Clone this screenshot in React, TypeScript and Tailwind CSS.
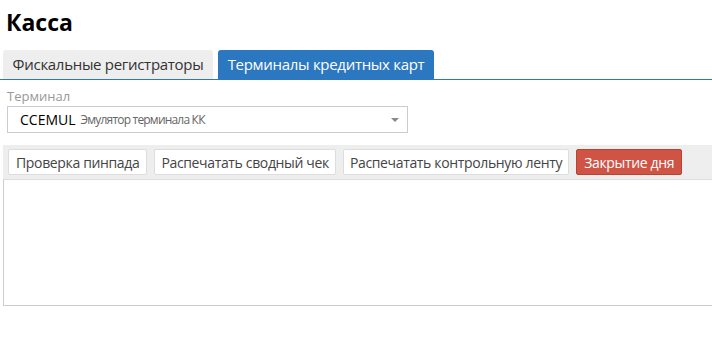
import React from "react";

const buttons = ["Проверка пинпада", "Распечатать сводный чек", "Распечатать контрольную ленту"];

export default function App() {
    return (
        <div className="bg-white min-h-screen text-[#333] pt-[8px]" style={{ fontFamily: '"Open Sans", "Noto Sans", sans-serif' }}>
            <h1 className="px-[6px] text-[23px] leading-[28px] font-bold text-black">Касса</h1>

            {/* Tabs */}
            <div className="mt-[14px] flex items-end gap-[5px] px-[3px] border-b border-[#2b77c0]">
                <div className="w-[210px] h-[29px] rounded-t-[3px] bg-[#eeeeee] text-[15px] tracking-[-0.3px] text-[#333] flex items-center justify-center">
                    Фискальные регистраторы
                </div>
                <div className="w-[216px] h-[29px] rounded-t-[3px] bg-[#2b77c0] text-[15px] tracking-[-0.3px] text-white flex items-center justify-center">
                    Терминалы кредитных карт
                </div>
            </div>

            {/* Terminal select */}
            <div className="px-[7px] mt-[8px]">
                <div className="text-[13px] leading-[17px] text-[#999]">Терминал</div>
                <div className="mt-[1px] w-[401px] h-[27px] border border-[#ccc] flex items-center pl-[12px] pr-[8px]">
                    <span className="text-[14px] text-black">CCEMUL</span>
                    <span className="ml-[5px] text-[12px] tracking-[-0.8px] text-[#666]">Эмулятор терминала КК</span>
                    <span className="ml-auto w-0 h-0 border-l-[4px] border-r-[4px] border-t-[4px] border-l-transparent border-r-transparent border-t-[#888]" />
                </div>
            </div>

            {/* Toolbar */}
            <div className="mt-[12px] ml-[3px] bg-[#eeeeee] border-b border-[#ddd] flex items-center gap-[7px] px-[5px] h-[35px]">
                {buttons.map((b, i) => (
                    <button key={b} className={i === 0 ? "h-[26px] px-[7px] bg-white border border-[#ddd] rounded-[2px] text-[14px] tracking-[-0.35px] text-[#444]" : "h-[26px] px-[6px] bg-white border border-[#ddd] rounded-[2px] text-[14px] tracking-[-0.35px] text-[#444]"}>
                        {b}
                    </button>
                ))}
                <button className="h-[26px] px-[7px] bg-[#cf5445] border border-[#b8432f] rounded-[2px] text-[14px] tracking-[-0.35px] text-white">
                    Закрытие дня
                </button>
            </div>

            {/* Output area */}
            <div className="ml-[3px] h-[126px] border-l border-b border-[#ccc]" />
        </div>
    );
}
